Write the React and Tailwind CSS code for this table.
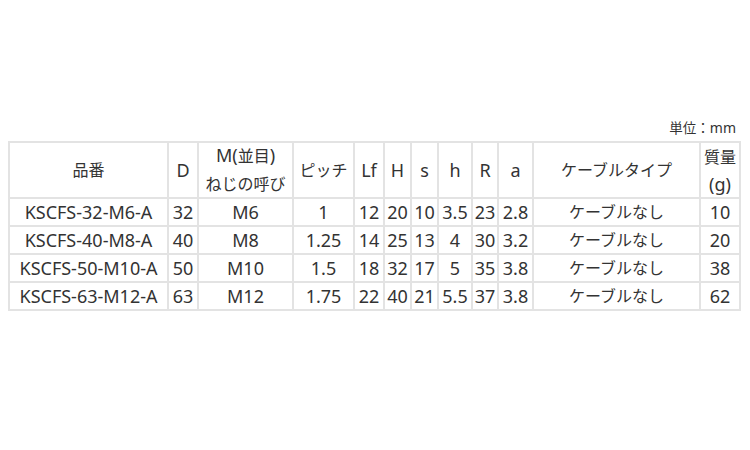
import React from 'react';

const rows = [
  ['KSCFS-32-M6-A', '32', 'M6', '1', '12', '20', '10', '3.5', '23', '2.8', 'ケーブルなし', '10'],
  ['KSCFS-40-M8-A', '40', 'M8', '1.25', '14', '25', '13', '4', '30', '3.2', 'ケーブルなし', '20'],
  ['KSCFS-50-M10-A', '50', 'M10', '1.5', '18', '32', '17', '5', '35', '3.8', 'ケーブルなし', '38'],
  ['KSCFS-63-M12-A', '63', 'M12', '1.75', '22', '40', '21', '5.5', '37', '3.8', 'ケーブルなし', '62'],
];

const headers = [
  ['品番'],
  ['D'],
  ['M(並目)', 'ねじの呼び'],
  ['ピッチ'],
  ['Lf'],
  ['H'],
  ['s'],
  ['h'],
  ['R'],
  ['a'],
  ['ケーブルタイプ'],
  ['質量', '(g)'],
];

// Latin glyphs run a little larger than the kana/kanji in the original font,
// so split each string into CJK and non-CJK pieces.
function Mixed({ text, cjk = 'text-[16px]' }) {
  const parts = text.split(/([\u3000-\u30ff\u4e00-\u9fff\uff00-\uffef]+)/).filter(Boolean);
  return parts.map((p, i) =>
    /[\u3000-\u30ff\u4e00-\u9fff\uff00-\uffef]/.test(p) ? (
      <span key={i} className={cjk}>{p}</span>
    ) : (
      <span key={i}>{p}</span>
    )
  );
}

export default function App() {
  return (
    <div
      className="w-[750px] h-[450px] bg-white text-[#333] pt-[118px] pl-[8px]"
      style={{ fontFamily: '"Noto Sans", "Noto Sans CJK JP", sans-serif' }}
    >
      <div className="w-[733px]">
        {/* unit label */}
        <div className="flex justify-end items-baseline pr-[5px] text-[14px] leading-[20px] mb-[3px]">
          <Mixed text="単位：mm" cjk="text-[13.5px]" />
        </div>

        {/* spec table */}
        <div className="grid grid-cols-[157px_28px_93px_59px_28px_25px_25px_32px_24px_33px_165px_38px] grid-rows-[54px_26px_26px_26px_26px] gap-[2px] p-[2px] bg-[#e3e3e3] text-[18px]">
          {headers.map((h, i) => (
            <div key={i} className="bg-white flex flex-col items-center justify-center leading-[27px] whitespace-nowrap">
              {h.map((line) => (
                <span key={line}>
                  <Mixed text={line} />
                </span>
              ))}
            </div>
          ))}
          {rows.map((r, ri) =>
            r.map((cell, ci) => (
              <div key={ri + '-' + ci} className="bg-white flex items-center justify-center leading-[26px] whitespace-nowrap">
                <Mixed text={cell} />
              </div>
            ))
          )}
        </div>
      </div>
    </div>
  );
}
